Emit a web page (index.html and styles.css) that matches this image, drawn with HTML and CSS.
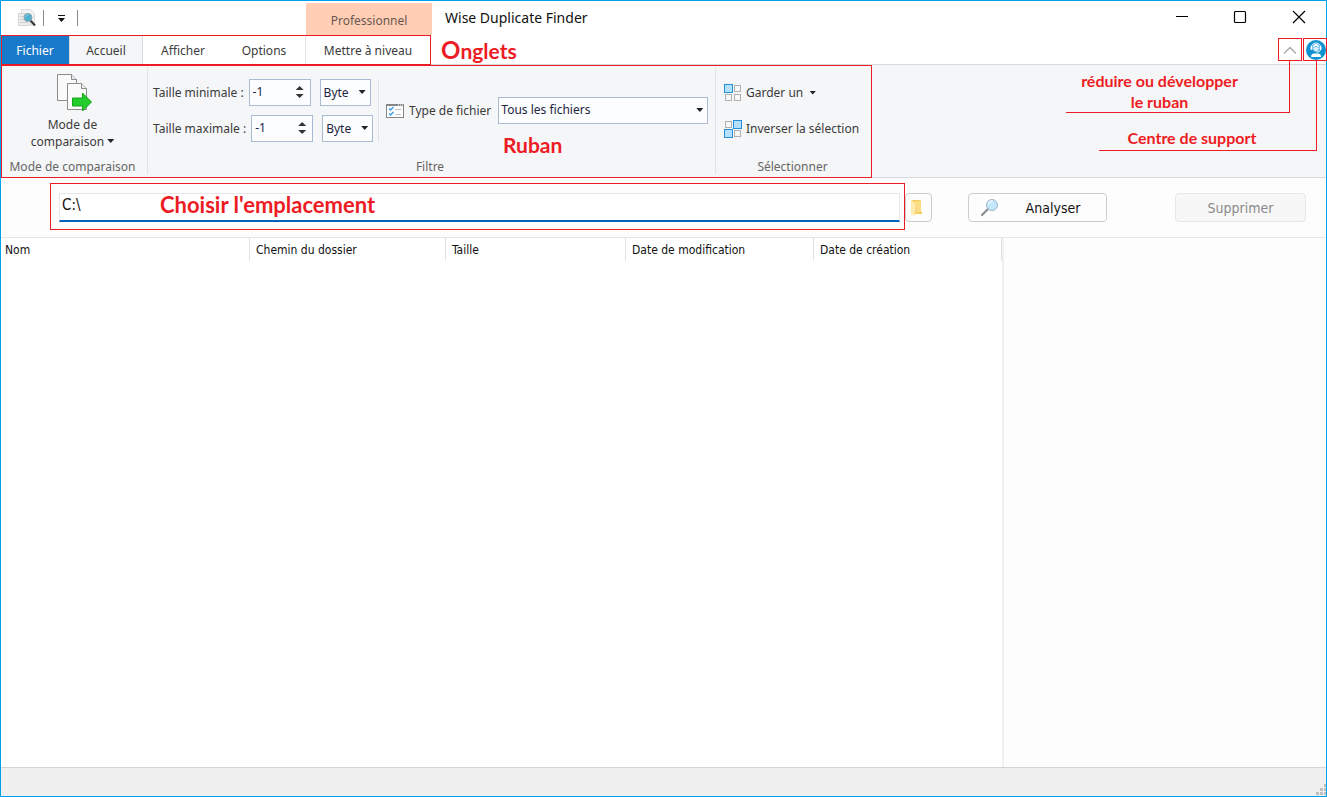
FILE: index.html
```html
<!DOCTYPE html>
<html lang="fr">
<head>
<meta charset="utf-8">
<title>Wise Duplicate Finder</title>
<link rel="stylesheet" href="styles.css">
</head>
<body>
<div class="window">
  <header class="titlebar">
    <div class="quick-access">
      <svg class="app-icon" width="18" height="20" viewBox="0 0 18 20" aria-hidden="true">
        <path d="M3.500 1.500h9l4 4v11h-13z" fill="#f3f3f3" stroke="#dadada"/>
        <path d="M.5 5.500h9l3 3v9H.5z" fill="#ececec" stroke="#d6d6d6"/>
        <path d="M2 8.500h4M2 11.500h4M2 14.500h8" stroke="#cfcfcf"/>
        <path d="M12.500 12.500l4.500 5" stroke="#30343a" stroke-width="2"/>
        <circle cx="10" cy="9.500" r="4" fill="#4fb0d3" stroke="#8ba3ad"/>
        <path d="M7.500 9.500c0-2 1.500-2.500 3-2.500" stroke="#8fd2ea" fill="none"/>
      </svg>
      <span class="qat-line"></span>
      <button class="qat-menu" aria-label="Personnaliser la barre d'accès rapide">
        <svg width="7" height="7" viewBox="0 0 7 7"><path d="M0 0h7v1H0zM0 3h7L3.500 7z" fill="#111"/></svg>
      </button>
      <span class="qat-line"></span>
    </div>
    <div class="context-title">Professionnel</div>
    <h1 class="title">Wise Duplicate Finder</h1>
    <div class="window-buttons">
      <button aria-label="Réduire"><svg width="14" height="14" viewBox="0 0 14 14"><path d="M1 6.500h12" stroke="#000"/></svg></button>
      <button aria-label="Agrandir"><svg width="14" height="14" viewBox="0 0 14 14"><rect x="1.500" y="1.500" width="11" height="11" rx="1" fill="none" stroke="#000" stroke-width="1.200"/></svg></button>
      <button aria-label="Fermer"><svg width="14" height="14" viewBox="0 0 14 14"><path d="M1 1l12 12M13 1L1 13" stroke="#000" stroke-width="1.200"/></svg></button>
    </div>
  </header>

  <div class="tab-row">
    <nav class="tabs" aria-label="Ruban">
      <button class="tab tab-file">Fichier</button>
      <button class="tab tab-home">Accueil</button>
      <button class="tab tab-view">Afficher</button>
      <button class="tab tab-options">Options</button>
      <button class="tab tab-upgrade">Mettre à niveau</button>
      <span class="mark mark-tabs"></span>
    </nav>
    <span class="note note-large note-tabs"><span class="initial">O</span>nglets</span>
    <div class="tab-tools">
      <button class="tool" aria-label="Réduire le ruban"><svg width="14" height="8" viewBox="0 0 14 8"><path d="M1 7.500L7 1.500l6 6" fill="none" stroke="#a8a8a8" stroke-width="1.300"/></svg></button>
      <button class="tool" aria-label="Centre de support">
        <svg width="20" height="20" viewBox="0 0 20 20">
          <circle cx="10" cy="10" r="10" fill="#1191d0"/>
          <path d="M5.500 7.500C5.500 1.500 14.500 1.500 14.500 7.500" fill="none" stroke="#fff"/>
          <rect x="4.500" y="6" width="2" height="4" rx="1" fill="#fff"/><rect x="13.500" y="6" width="2" height="4" rx="1" fill="#fff"/>
          <path d="M7 7q0-3 3-3t3 3q-2 0-3-1-1 1-3 1z" fill="#fff"/>
          <path d="M7 7.500q2 0 3-1 1 1 3 1 0 4-3 4t-3-4z" fill="#d8effa"/>
          <path d="M14.500 9.500q0 2.500-4 2.800" fill="none" stroke="#fff"/>
          <path d="M5 17q0-3.500 3-3.500h4q3 0 3 3.500z" fill="#fff"/>
        </svg>
      </button>
    </div>
  </div>

  <section class="ribbon">
    <div class="groups">
      <div class="group group-mode">
        <button class="mode-button">
          <svg width="36" height="38" viewBox="0 0 36 38" aria-hidden="true">
            <path d="M.5.500h14l5 5v21H.5z" fill="#fafafa" stroke="#8c8c8c"/>
            <path d="M14.500.500v5h5" fill="#ececec" stroke="#8c8c8c"/>
            <path d="M10.500 9.500h14l5 5v21h-19z" fill="#fafafa" stroke="#8c8c8c"/>
            <path d="M24.500 9.500v5h5" fill="#ececec" stroke="#8c8c8c"/>
            <path d="M15.500 24h10v-5l9 9-9 9v-5h-10z" fill="#24cc2c" stroke="#16a41d"/>
          </svg>
          <span class="mode-text">Mode de<br>comparaison <span class="arrow"></span></span>
        </button>
        <div class="group-label">Mode de comparaison</div>
      </div>
      <div class="group group-filter">
        <div class="filter-body">
          <div class="sizes">
            <div class="size-row">
              <label for="min">Taille minimale :</label>
              <span class="spin"><input id="min" type="number" value="-1"><span class="spin-arrows"></span></span>
              <span class="unit"><select aria-label="Unité minimale"><option>Byte</option></select></span>
            </div>
            <div class="size-row">
              <label for="max">Taille maximale :</label>
              <span class="spin"><input id="max" type="number" value="-1"><span class="spin-arrows"></span></span>
              <span class="unit"><select aria-label="Unité maximale"><option>Byte</option></select></span>
            </div>
          </div>
          <div class="type-row">
            <svg width="18" height="14" viewBox="0 0 18 14" aria-hidden="true">
              <rect x=".5" y=".5" width="17" height="13" fill="#fdfdfd" stroke="#858585"/>
              <path d="M0 1h18" stroke="#858585" stroke-width="2"/>
              <path d="M12 1h1m1 0h1m1 0h1" stroke="#fff"/>
              <path d="M3 4.500l1.500 1.500L7.500 3M3 9.500L4.500 11l3-3" fill="none" stroke="#3c9fe6" stroke-width="1.500"/>
              <path d="M9 5.500h6M9 10.500h6" stroke="#c2c2c2"/>
            </svg>
            <label for="type">Type de fichier</label>
            <span class="unit type-select"><select id="type"><option>Tous les fichiers</option></select></span>
          </div>
        </div>
        <div class="group-label">Filtre</div>
        <span class="note note-large note-ribbon">Ruban</span>
      </div>
      <div class="group group-select">
        <div class="select-body">
          <button class="line-button">
            <svg width="18" height="18" viewBox="0 0 18 18" aria-hidden="true"><rect x=".5" y=".5" width="8" height="8" fill="#b5e0fd" stroke="#258fdc"/><g fill="#f8f8f8" stroke="#b0b0b0"><rect x="10.500" y="1.500" width="6" height="6"/><rect x="1.500" y="10.500" width="6" height="6"/><rect x="10.500" y="10.500" width="6" height="6"/></g></svg>
            Garder un <span class="arrow"></span>
          </button>
          <button class="line-button">
            <svg width="18" height="18" viewBox="0 0 18 18" aria-hidden="true"><g fill="#b5e0fd" stroke="#258fdc"><rect x="9.500" y=".5" width="8" height="8"/><rect x=".5" y="9.500" width="8" height="8"/></g><g fill="#f8f8f8" stroke="#b0b0b0"><rect x="1.500" y="1.500" width="6" height="6"/><rect x="10.500" y="10.500" width="6" height="6"/></g></svg>
            Inverser la sélection
          </button>
        </div>
        <div class="group-label">Sélectionner</div>
      </div>
      <span class="mark mark-ribbon"></span>
    </div>
    <div class="callout callout-collapse">réduire ou développer<br>le ruban</div>
    <div class="callout callout-support">Centre de support</div>
  </section>

  <section class="location-bar">
    <div class="location">
      <input class="path" type="text" value="C:\" aria-label="Emplacement">
      <span class="note note-large note-location">Choisir l'emplacement</span>
      <span class="mark mark-location"></span>
    </div>
    <button class="action browse" aria-label="Parcourir">
      <svg width="13" height="17" viewBox="0 0 13 17"><path d="M1 1h10v11l1 1v2H1z" fill="#f5cd62"/><path d="M5 2h6v11H4z" fill="#fbdc85"/><path d="M1 1l4 3v13l-4-2z" fill="#ffebae"/></svg>
    </button>
    <button class="action analyse">
      <svg width="20" height="19" viewBox="0 0 20 19" aria-hidden="true"><path d="M8 11L2 17" stroke="#858e95" stroke-width="2.200" stroke-linecap="round"/><circle cx="12" cy="7" r="5.500" fill="#c4e7fb" stroke="#9bb5c7"/><path d="M8.500 6q1-3 4-3" stroke="#eefaff" stroke-width="1.500" fill="none"/></svg>
      <span>Analyser</span>
    </button>
    <button class="action delete" disabled>Supprimer</button>
  </section>

  <main class="content">
    <div class="results">
      <table>
        <thead><tr><th class="c-name">Nom</th><th class="c-folder">Chemin du dossier</th><th class="c-size">Taille</th><th class="c-modified">Date de modification</th><th class="c-created">Date de création</th></tr></thead>
        <tbody></tbody>
      </table>
    </div>
    <aside class="preview"></aside>
  </main>

  <footer class="status">
    <svg width="10" height="12" viewBox="0 0 10 12" aria-hidden="true"><path d="M8 0h2v3H8zM4 4h3v3H4zM8 4h2v3H8zM0 8h3v3H0zM4 8h3v3H4zM8 8h2v3H8z" fill="#bfbfbf"/></svg>
  </footer>
</div>
</body>
</html>
```

FILE: styles.css
```css
* { box-sizing: border-box; }
body { margin: 0; font: 12px/16px "Noto Sans", sans-serif; color: #3b3b3b; }
button, input, select { font: inherit; color: inherit; }
button { border: 0; background: none; padding: 0; }
svg { display: block; flex: none; }

.window { min-height: 100vh; display: flex; flex-direction: column; border: 1px solid #00a0ea; background: #fff; }

.titlebar { display: flex; height: 34px; }
.quick-access { width: 305px; display: flex; align-items: center; padding-left: 17px; }
.qat-line { width: 1px; height: 16px; background: #8a8a8a; margin-left: 7px; }
.qat-menu { width: 26px; display: flex; justify-content: center; margin-left: 4px; padding-top: 1px; }
.qat-menu + .qat-line { margin-left: 3px; }
.context-title { width: 126px; margin-top: 2px; background: #ffceb5; color: #6a5850; text-align: center; line-height: 35px; }
.title { margin: 0 0 0 13px; font-size: 14px; font-weight: 400; line-height: 33px; color: #111; }
.window-buttons { margin-left: auto; display: flex; }
.window-buttons button { width: 58px; display: flex; justify-content: center; align-items: center; padding-bottom: 2px; }
.window-buttons button:last-child { width: 57px; padding-left: 3px; }

.tab-row { display: flex; height: 30px; border-bottom: 1px solid #d9dadb; }
.tabs { display: flex; position: relative; height: 30px; padding-right: 1px; }
.tab { text-align: center; padding-top: 1px; }
.tab-file { width: 68px; background: #1979ca; color: #fff; }
.tab-home { width: 74px; background: #f5f6f7; border: solid #dadbdc; border-width: 1px 1px 0; padding-top: 0; }
.tab-view { width: 80px; }
.tab-options { width: 83px; border-right: 1px solid #e2e2e2; }
.tab-upgrade { width: 124px; }
.tab-tools { margin-left: auto; display: flex; gap: 1px; padding-top: 3px; }
.tool { width: 24px; height: 23px; border: 1px solid #ed1c24; display: flex; justify-content: center; align-items: center; }
.tab-tools .tool:last-child { margin-right: -1px; padding-left: 1px; }

.note, .callout { color: #ed1c24; font-family: Lato, sans-serif; font-weight: 700; }
.note-large { font-size: 21px; line-height: 24px; }
.note-tabs { margin-left: 10px; line-height: 30px; }
.initial { font-size: 24px; }
.mark { position: absolute; border: 1px solid #ed1c24; pointer-events: none; }
.mark-tabs { inset: 0; }

.ribbon { position: relative; height: 113px; background: #f5f6f7; border-bottom: 1px solid #d9dadb; }
.groups { display: flex; position: relative; width: max-content; height: 113px; }
.mark-ribbon { inset: 0; }
.group { position: relative; display: flex; flex-direction: column; padding: 2px 0; }
.group + .group::before { content: ""; position: absolute; left: -1px; top: 2px; height: 107px; width: 1px; background: #e2e3e4; }
.group-label { margin-top: auto; text-align: center; color: #666; line-height: 18px; }
.group-mode { width: 147px; padding-right: 4px; }
.mode-button { display: flex; flex-direction: column; align-items: center; padding-top: 7px; gap: 4px; line-height: 17px; }
.mode-button svg { margin-left: 4px; }
.arrow { display: inline-block; width: 7px; height: 4px; background: #222; clip-path: polygon(0 0, 100% 0, 50% 100%); vertical-align: 3px; }
.group-filter { width: 568px; padding-left: 5px; }
.group-filter .group-label { padding-right: 9px; }
.filter-body { display: flex; align-items: center; padding-top: 12px; }
.sizes { display: flex; flex-direction: column; gap: 9px; width: 226px; border-right: 1px solid #e2e3e4; }
.size-row { display: flex; align-items: center; }
.spin { position: relative; width: 62px; margin-left: 5px; }
.spin input, .unit select { appearance: none; width: 100%; height: 27px; display: block; border: 1px solid #abbad3; border-radius: 0; background: #fbfdff; padding: 0 3px; color: #1e2440; }
.spin input { appearance: textfield; padding-bottom: 3px; }
.spin input::-webkit-inner-spin-button { display: none; }
.spin-arrows::before, .spin-arrows::after { content: ""; position: absolute; right: 7px; width: 8px; height: 4px; background: #333; }
.spin-arrows::before { top: 7px; clip-path: polygon(50% 0, 100% 100%, 0 100%); }
.spin-arrows::after { top: 15px; clip-path: polygon(0 0, 100% 0, 50% 100%); }
.unit { position: relative; width: 51px; margin-left: 9px; }
.unit::after { content: ""; position: absolute; right: 5px; top: 11px; width: 7px; height: 4px; background: #222; clip-path: polygon(0 0, 100% 0, 50% 100%); pointer-events: none; }
.type-row { display: flex; align-items: center; gap: 5px; padding-left: 7px; }
.type-select { width: 210px; margin-left: 2px; }
.unit.type-select select { padding: 0 2px 2px; }
.note-ribbon { position: absolute; left: 355px; top: 68px; }
.group-select { width: 156px; }
.group-select .group-label { padding-right: 3px; }
.select-body { display: flex; flex-direction: column; align-items: flex-start; gap: 18px; padding: 16px 0 0 8px; }
.line-button { display: flex; align-items: center; gap: 4px; height: 18px; padding-top: 1px; }
.line-button .arrow { margin-left: 2px; }

.callout { position: absolute; top: -4px; border: solid #ed1c24; border-width: 0 1px 1px 0; font-size: 16px; text-align: center; }
.callout-collapse { right: 36px; width: 224px; height: 52px; padding: 9px 36px 0 0; line-height: 21px; white-space: nowrap; }
.callout-support { right: 9px; width: 218px; height: 90px; padding: 67px 31px 0 0; line-height: 20px; }

.location-bar { display: flex; align-items: center; height: 60px; padding: 0 20px 0 58px; border-bottom: 1px solid #e6e6e6; background: #fdfdfd; }
.location { position: relative; flex: 1; }
.path { display: block; width: 100%; height: 29px; border: 1px solid #e8e8e8; border-bottom: 2px solid #0063bd; background: #fff; padding: 0 2px 4px; font: 15px "DejaVu Sans Condensed", sans-serif; color: #111; outline: 0; }
.note-location { position: absolute; left: 101px; top: 0; font-size: 22px; }
.mark-location { inset: -10px -5px -8px -9px; }
.action { height: 29px; border: 1px solid #cdcdcd; border-radius: 4px; background: #fdfdfd; display: flex; align-items: center; font: 14px "DejaVu Sans Condensed", sans-serif; color: #111; }
.browse { width: 27px; margin-left: 5px; justify-content: center; padding-right: 5px; }
.analyse { width: 139px; margin-left: 36px; padding-left: 11px; }
.analyse span { flex: 1; text-align: center; }
.delete { width: 131px; margin-left: 68px; justify-content: center; background: #f7f7f7; border-color: #e7e7e7; color: #8a8a8a; }

.content { flex: 1; display: flex; }
.results { flex: 1; border-right: 2px solid #f0f0f0; }
.preview { width: 322px; background: #fdfdfd; }
table { width: 100%; table-layout: fixed; border-collapse: collapse; }
th { height: 23px; padding: 1px 0 0 6px; border-right: 1px solid #e2e2e2; text-align: left; font: 12px/22px "DejaVu Sans Condensed", sans-serif; color: #111; }
.c-name { padding-left: 4px; }
.c-folder { width: 196px; }
.c-size { width: 180px; }
.c-modified, .c-created { width: 188px; }

.status { height: 29px; border-top: 1px solid #d4d4d4; background: #f0f0f0; display: flex; justify-content: flex-end; align-items: flex-end; }
```
